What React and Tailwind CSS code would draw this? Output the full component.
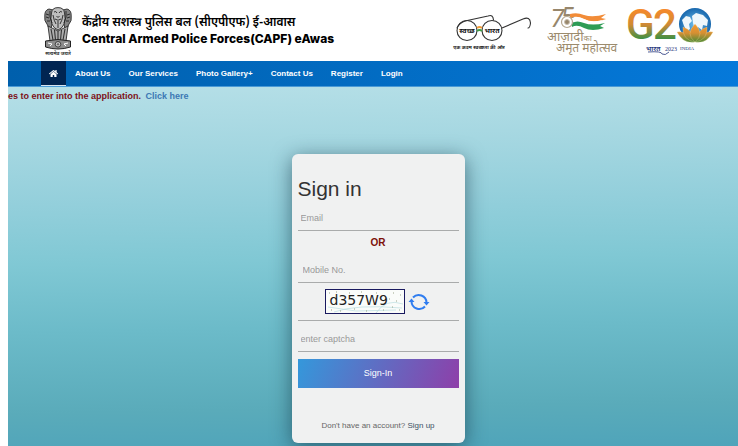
import React from 'react';
import { FaHome } from 'react-icons/fa';

const navLinks = ['About Us', 'Our Services', 'Photo Gallery+', 'Contact Us', 'Register', 'Login'];

const hindi = '"Noto Sans Devanagari", "Noto Sans", sans-serif';

function Emblem() {
  return (
    <svg viewBox="0 0 28 50" className="w-7 h-[50px] shrink-0 overflow-visible" role="img" aria-label="State Emblem of India">
      {/* manes */}
      <g fill="#858585" stroke="#2b2b2b" strokeWidth="0.9">
        <path d="M5 2 Q0.500 3 0.800 9 Q0 14 3 17 Q4 21 7 22 L9 12 L9 3 Z" />
        <path d="M23 2 Q27.500 3 27.200 9 Q28 14 25 17 Q24 21 21 22 L19 12 L19 3 Z" />
        <path d="M14 0.600 Q8 0.600 7.500 6 Q6 12 8 17 Q9 21 14 23 Q19 21 20 17 Q22 12 20.500 6 Q20 0.600 14 0.600 Z" fill="#bdbdbd" />
      </g>
      {/* faces */}
      <g fill="none" stroke="#222" strokeWidth="0.9">
        <path d="M10 5 Q12 3.500 13 6 M18 5 Q16 3.500 15 6 M12.500 9 L14 10.500 L15.500 9 M11 12 Q14 14.500 17 12 M9 8 Q10 14 12 17 M19 8 Q18 14 16 17 M14 14 V21" />
        <path d="M2 7 L5 8 M2 10 L5 11 M3 14 L6 14 M26 7 L23 8 M26 10 L23 11 M25 14 L22 14 M6 4 Q5 10 8 16 M22 4 Q23 10 20 16" />
      </g>
      {/* legs */}
      <path d="M4 19 L6 34 H22 L24 19 L18 22 L14 24 L10 22 Z" fill="#adadad" stroke="#2b2b2b" strokeWidth="0.9" />
      <path d="M7 22 L9 33 M10.500 23 L11.500 33 M14 24 V33 M17.500 23 L16.500 33 M21 22 L19 33" stroke="#333" strokeWidth="1.1" fill="none" />
      {/* abacus */}
      <path d="M1.500 34 Q14 31 26.500 34 V40 Q14 44 1.500 40 Z" fill="#8c8c8c" stroke="#222" strokeWidth="1" />
      <circle cx="14" cy="37.300" r="2.800" fill="#eee" stroke="#222" strokeWidth="0.8" />
      <path d="M14 34.700 V40 M11.400 37.300 H16.600 M12.200 35.500 L15.800 39.100 M15.800 35.500 L12.200 39.100" stroke="#222" strokeWidth="0.4" />
      <path d="M4 36 L8 37 L6 39 M24 36 L20 37 L22 39" stroke="#fff" strokeWidth="1" fill="none" />
      <text x="14" y="48" textAnchor="middle" fontSize="5" fontWeight="600" fill="#222" style={{ fontFamily: hindi }}>सत्यमेव जयते</text>
    </svg>
  );
}

function SwachhBharat() {
  return (
    <svg viewBox="0 0 80 38" className="w-20 h-[38px] overflow-visible" role="img" aria-label="Swachh Bharat">
      <g fill="none" stroke="#333" strokeWidth="1.1" strokeLinecap="round">
        <circle cx="15" cy="16.500" r="10" />
        <circle cx="40" cy="16.500" r="10" />
        <path d="M5 14 Q7 9 13 7 L36 2 Q41 0 41.500 6" />
        <path d="M50 14 L71 5 Q78 2 78.500 9 Q78 14 76 14" />
      </g>
      <path d="M25 14 Q27.500 12 30 14" stroke="#f29a38" strokeWidth="1.800" fill="none" />
      <path d="M25 17 Q27.500 15 30 17" stroke="#3f9b46" strokeWidth="1.800" fill="none" />
      <text x="15" y="19" textAnchor="middle" fontSize="7" fontWeight="700" fill="#111" style={{ fontFamily: hindi }}>स्वच्छ</text>
      <text x="40" y="19" textAnchor="middle" fontSize="7" fontWeight="700" fill="#111" style={{ fontFamily: hindi }}>भारत</text>
      <text x="27" y="35" textAnchor="middle" fontSize="5" fontWeight="700" fill="#222" style={{ fontFamily: hindi }}>एक कदम स्वच्छता की ओर</text>
    </svg>
  );
}

function AmritMahotsav() {
  return (
    <svg viewBox="0 0 68 48" className="w-[68px] h-12 overflow-visible" role="img" aria-label="Azadi Ka Amrit Mahotsav">
      <text x="4" y="21" fontSize="26" fontStyle="italic" fill="#97866b" className="font-['Lato',sans-serif]">7</text>
      <text x="15" y="21" fontSize="26" fill="#97866b" className="font-['Lato',sans-serif]">5</text>
      <path d="M24 8 Q31 6 38 9 Q47 12 60 8 L55 12 L60 13 Q47 18 38 13 Q31 9 24 12 Z" fill="#f28c38" />
      <path d="M26 12 Q31 10 38 13 Q46 17 56 14 L54 18 Q46 20 38 17 Q31 14 26 17 Z" fill="#fff" />
      <path d="M26 17 Q31 14 38 17 Q46 20 59 17 L54 20 L58 22 Q46 26 38 22 Q31 18 26 21 Z" fill="#2f9c55" />
      <circle cx="21" cy="16" r="5.500" fill="#fff" stroke="#b4a790" strokeWidth="1.200" />
      <circle cx="21" cy="16" r="2.500" fill="#97866b" stroke="#c9bfae" strokeWidth="1" />
      <text x="1" y="35" fontSize="13" fill="#9c8b6d" style={{ fontFamily: hindi }}>
        आज़ादी<tspan fontSize="8">का</tspan>
      </text>
      <text x="10" y="46" fontSize="12" fill="#9c8b6d" style={{ fontFamily: hindi }}>अमृत महोत्सव</text>
    </svg>
  );
}

function G20() {
  return (
    <svg viewBox="0 0 90 50" className="w-[90px] h-[50px] overflow-visible" role="img" aria-label="G20 India 2023">
      <defs>
        <linearGradient id="g20-text" x1="0" y1="0" x2="0" y2="1">
          <stop offset="0.2" stopColor="#f58a2c" />
          <stop offset="0.5" stopColor="#d08a35" />
          <stop offset="0.8" stopColor="#3c9145" />
        </linearGradient>
        <linearGradient id="g20-lotus" gradientUnits="userSpaceOnUse" x1="0" y1="18" x2="0" y2="36">
          <stop offset="0" stopColor="#f59a2f" />
          <stop offset="0.5" stopColor="#d68f33" />
          <stop offset="1" stopColor="#4c8a35" />
        </linearGradient>
        <radialGradient id="g20-globe">
          <stop offset="0" stopColor="#6fc0ec" />
          <stop offset="1" stopColor="#1767ad" />
        </radialGradient>
      </defs>
      <text x="0" y="33" fontSize="42" fontWeight="500" fill="url(#g20-text)" className="font-['Roboto',sans-serif]">G</text>
      <text x="27" y="33" fontSize="42" fontWeight="500" fill="url(#g20-text)" className="font-['Roboto',sans-serif]">2</text>
      <circle cx="69" cy="18" r="16" fill="url(#g20-globe)" />
      <g fill="#eef7fb">
        <path d="M56 14 L60 10 L64 11 L66 15 L63 18 L64 23 L61 25 L58 20 Z" />
        <path d="M66 10 L70 7 L77 9 L82 14 L81 20 L77 19 L76 24 L72 21 L69 24 L67 17 Z" />
      </g>
      <g fill="url(#g20-lotus)" stroke="#f7dfa8" strokeWidth="0.300">
        <path d="M51 26 Q60 24 69 36 Q57 38 51 26 Z" />
        <path d="M87 26 Q78 24 69 36 Q81 38 87 26 Z" />
        <path d="M57 21 Q67 24 69 36 Q56 34 57 21 Z" />
        <path d="M81 21 Q71 24 69 36 Q82 34 81 21 Z" />
        <path d="M69 18 Q79 28 69 36 Q59 28 69 18 Z" />
      </g>
      <text x="20" y="45" fontSize="7" fontWeight="600" fill="#25357b" style={{ fontFamily: hindi }}>भारत</text>
      <path d="M22 46 Q36 45 36 48 Q39 50 43 46" fill="none" stroke="#25357b" strokeWidth="0.800" />
      <text x="39" y="45" fontSize="6" fill="#25357b" className="font-['Liberation_Serif',serif]">2023</text>
      <text x="54" y="44" fontSize="5" fill="#25357b" className="font-['Liberation_Serif',serif]">INDIA</text>
    </svg>
  );
}

function RefreshIcon() {
  return (
    <svg viewBox="0 0 20 18" className="w-5 h-[18px] overflow-visible" fill="none" stroke="#2f7df0" strokeWidth="2">
      <path d="M4 4.500 A7.800 7.800 0 0 1 17.500 9.500" />
      <path d="M16 13.500 A7.800 7.800 0 0 1 2.500 8.500" />
      <path d="M14.500 9 H20.500 L17.500 12.500 Z M-0.500 9 H5.500 L2.500 5.500 Z" fill="#2f7df0" stroke="none" />
    </svg>
  );
}

function Captcha() {
  return (
    <div className="relative w-20 h-[25px] border border-[#19195f] bg-[#fafcfa]">
      <svg viewBox="0 0 78 23" className="absolute inset-0 w-full h-full" fill="none">
        <path d="M8 22 Q30 14 76 18 M50 23 Q60 8 77 14 M2 17 L30 21 L70 20" stroke="#b9dce0" strokeWidth="0.700" />
        <path d="M3 3h1M10 2h1M23 3h1M35 2h1M50 3h1M67 3h1M74 5h1M63 9h1M70 11h1M5 20h1M14 21h1M28 19h1M40 21h1M57 20h1M66 17h1M73 20h1" stroke="#9aa58a" />
      </svg>
      <span className="relative block pl-1 text-[14px] leading-[21px] text-[#222] font-['DejaVu_Sans',sans-serif]">d357W9</span>
    </div>
  );
}

function Field({ id, label, type = 'text', className = '' }) {
  return (
    <div className={`border-b border-[#a9abab] ${className}`}>
      <label htmlFor={id} className="sr-only">{label}</label>
      <input
        id={id}
        type={type}
        placeholder={label}
        className="block w-full h-6 px-[3px] bg-transparent text-[9px] text-gray-700 placeholder:text-[#999] outline-none"
      />
    </div>
  );
}

export default function App() {
  return (
    <div className="min-h-screen flex flex-col pl-2 bg-white font-['Liberation_Sans',Arial,sans-serif]">
      <header className="flex items-start h-[61px] pl-9 pr-[22px]">
        <div className="flex items-start gap-2 pt-[7px]">
          <Emblem />
          <div className="pt-2 pl-[2px] text-black whitespace-nowrap">
            <p className="text-[12px] leading-4 font-semibold" style={{ fontFamily: hindi }}>
              केंद्रीय सशस्त्र पुलिस बल (सीएपीएफ) ई-आवास
            </p>
            <h1 className="text-[12px] leading-4 font-extrabold font-['Inter',sans-serif]">
              Central Armed Police Forces(CAPF) eAwas
            </h1>
          </div>
        </div>
        <div className="flex items-start gap-3 ml-auto pt-[6px]">
          <div className="pt-2 pr-[2px]"><SwachhBharat /></div>
          <AmritMahotsav />
          <G20 />
        </div>
      </header>

      <nav className="flex h-[26px] pl-[33px] border-b border-[#4a9ad6] bg-linear-to-r from-[#005fac] to-[#0579da] text-[8px] font-bold text-white">
        <a href="#home" aria-label="Home" className="flex items-center px-2 bg-[#012552] border-b border-[#d6e4f0]">
          <FaHome size={9} />
        </a>
        {navLinks.map((link) => (
          <a key={link} href="#" className="flex items-center px-[9px] whitespace-nowrap">{link}</a>
        ))}
      </nav>

      <main className="flex-1 bg-[linear-gradient(179deg,#b5dfe7_0%,#a5d7e1_16%,#93cfdb_32%,#80c8d4_48%,#6cbbc9_66%,#5aabba_88%,#4fa4ba_100%)]">
        <p className="h-[67px] pt-[2px] text-[9px] leading-[14px] font-bold text-[#7d1018]">
          es to enter into the application. <a href="#" className="pl-[2px] text-[#3c78b4]">Click here</a>
        </p>

        <div className="pl-[10px] pb-[3px]">
          <form
            className="w-[173px] mx-auto px-[6px] pt-5 pb-[11px] rounded-md bg-[#f0f1f1] shadow-[0_4px_20px_rgba(20,50,65,0.6)]"
            onSubmit={(e) => e.preventDefault()}
          >
            <h2 className="h-8 text-[21px] leading-[30px] text-[#333]">Sign in</h2>
            <Field id="email" label="Email" type="email" />
            <p className="py-1 text-center text-[10px] leading-4 font-bold text-[#7d1008]">OR</p>
            <Field id="mobile" label="Mobile No." type="tel" className="mt-[3px] pl-[2px]" />
            <div className="flex items-center gap-1 h-[38px] pl-[27px] border-b border-[#a9abab]">
              <Captcha />
              <button type="button" aria-label="Refresh captcha"><RefreshIcon /></button>
            </div>
            <Field id="captcha" label="enter captcha" className="pt-[6px]" />
            <button
              type="submit"
              className="block w-full h-[29px] mt-[7px] bg-[linear-gradient(110deg,#3498db,#8e3fa9)] text-[9px] text-white"
            >
              Sign-In
            </button>
            <p className="pt-8 text-center text-[8px] leading-3 text-[#666]">
              Don't have an account? <a href="#" className="text-[#3b5166]">Sign up</a>
            </p>
          </form>
        </div>
      </main>
    </div>
  );
}
